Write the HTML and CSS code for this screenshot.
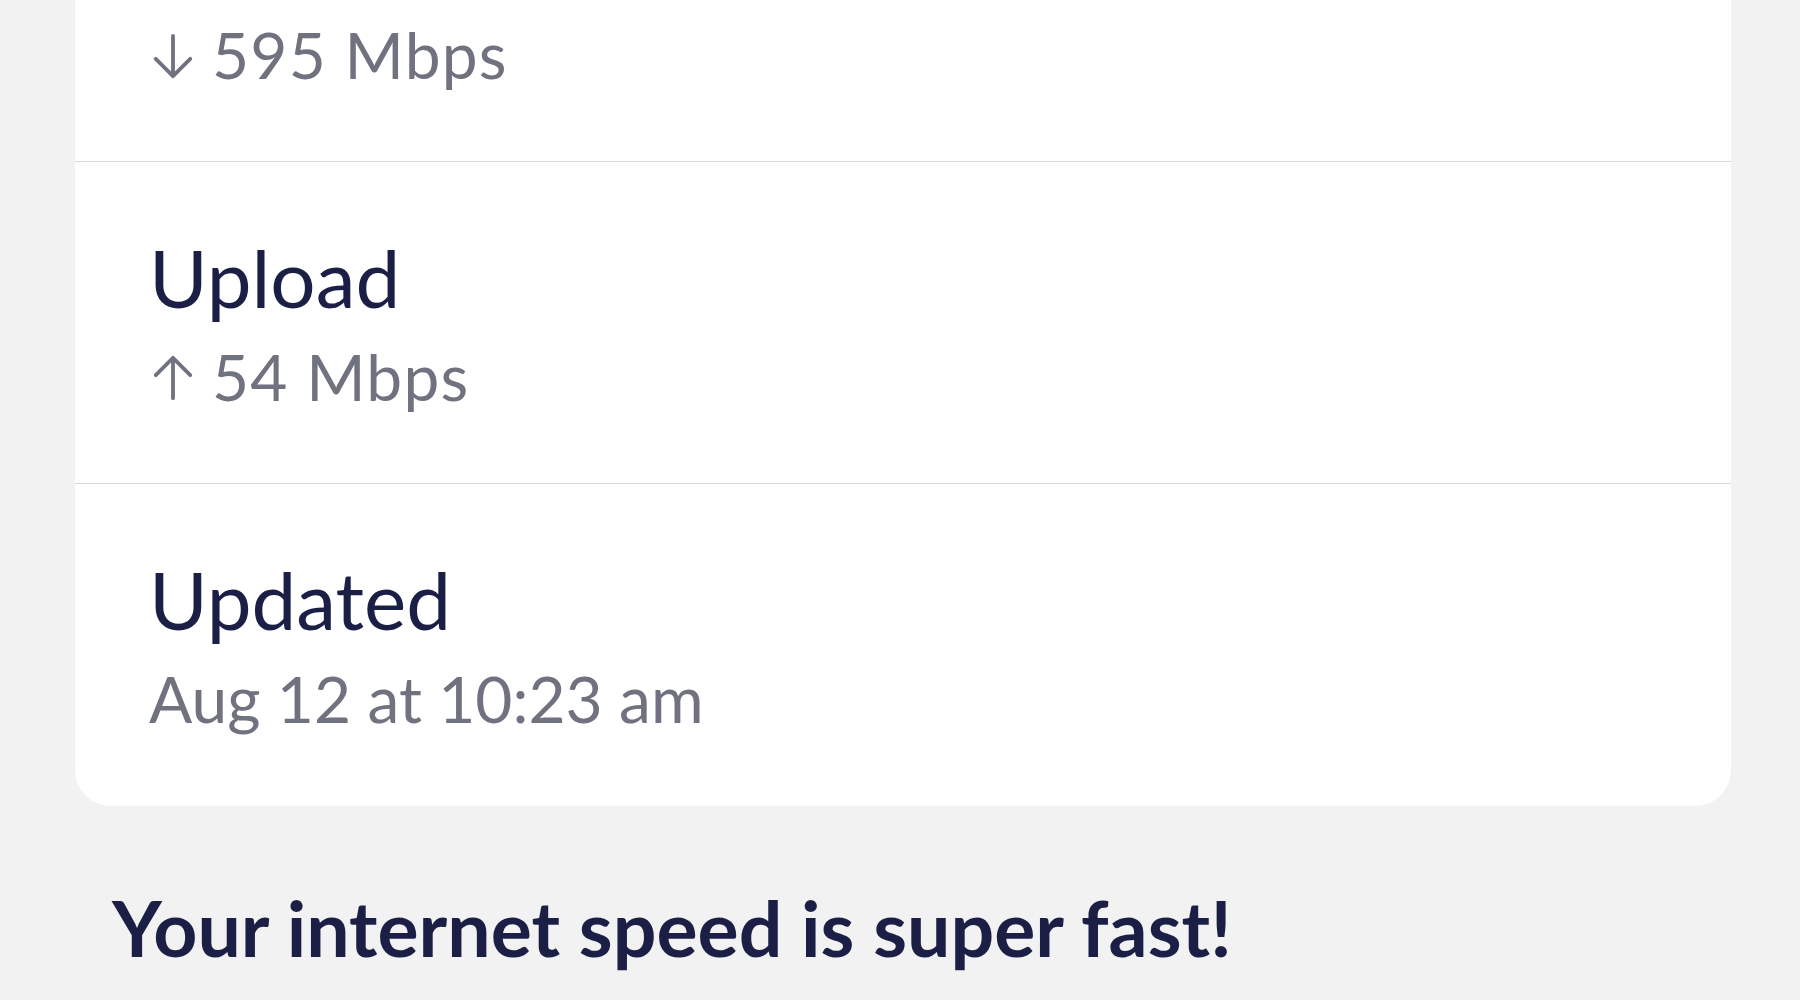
FILE: index.html
```html
<!DOCTYPE html>
<html lang="en">
<head>
<meta charset="utf-8">
<title>Speed test</title>
<link rel="stylesheet" href="styles.css">
</head>
<body>
<main class="page">
  <section class="card">
    <div class="row row-first">
      <div class="value speed"><svg class="arrow" viewBox="0 0 42 48" width="42" height="46"><path d="M21 3 V45 M3 27 L21 45 L39 27" fill="none" stroke="currentColor" stroke-width="4" stroke-linecap="round" stroke-linejoin="round"/></svg>595 Mbps</div>
    </div>
    <div class="row">
      <div class="label">Upload</div>
      <div class="value speed"><svg class="arrow" viewBox="0 0 42 48" width="42" height="46"><path d="M21 45 V3 M3 21 L21 3 L39 21" fill="none" stroke="currentColor" stroke-width="4" stroke-linecap="round" stroke-linejoin="round"/></svg>54 Mbps</div>
    </div>
    <div class="row">
      <div class="label">Updated</div>
      <div class="value">Aug 12 at 10:23 am</div>
    </div>
  </section>
  <h2 class="verdict">Your internet speed is super fast!</h2>
</main>
</body>
</html>
```

FILE: styles.css
```css
html, body {
  margin: 0;
  padding: 0;
  background: #f2f2f2;
  overflow: hidden;
}
body {
  font-family: Lato, "Noto Sans", sans-serif;
  height: 1000px;
}
.page {
  padding: 0 69px 0 75px;
}
.card {
  background: #ffffff;
  border-radius: 0 0 36px 36px;
  overflow: hidden;
}
.row {
  padding: 70px 74px 66px;
  border-bottom: 1px solid #d8d8da;
}
.row-first {
  padding-top: 0;
}
.row-first .value {
  margin-top: 15px;
}
.row:last-child {
  border-bottom: 0;
  padding-bottom: 67px;
}
.label {
  font-size: 80px;
  line-height: 90px;
  color: #1b1f45;
  font-weight: 400;
}
.value {
  margin-top: 15px;
  font-size: 64px;
  line-height: 80px;
  color: #70727f;
  white-space: nowrap;
}
.speed {
  letter-spacing: 1.2px;
}
.arrow {
  vertical-align: baseline;
  margin-left: 3px;
  margin-right: 18px;
  color: #70727f;
}
.verdict {
  margin: 76px 0 0 37px;
  font-size: 77px;
  line-height: 90px;
  font-weight: 700;
  color: #1b1f45;
}
```
